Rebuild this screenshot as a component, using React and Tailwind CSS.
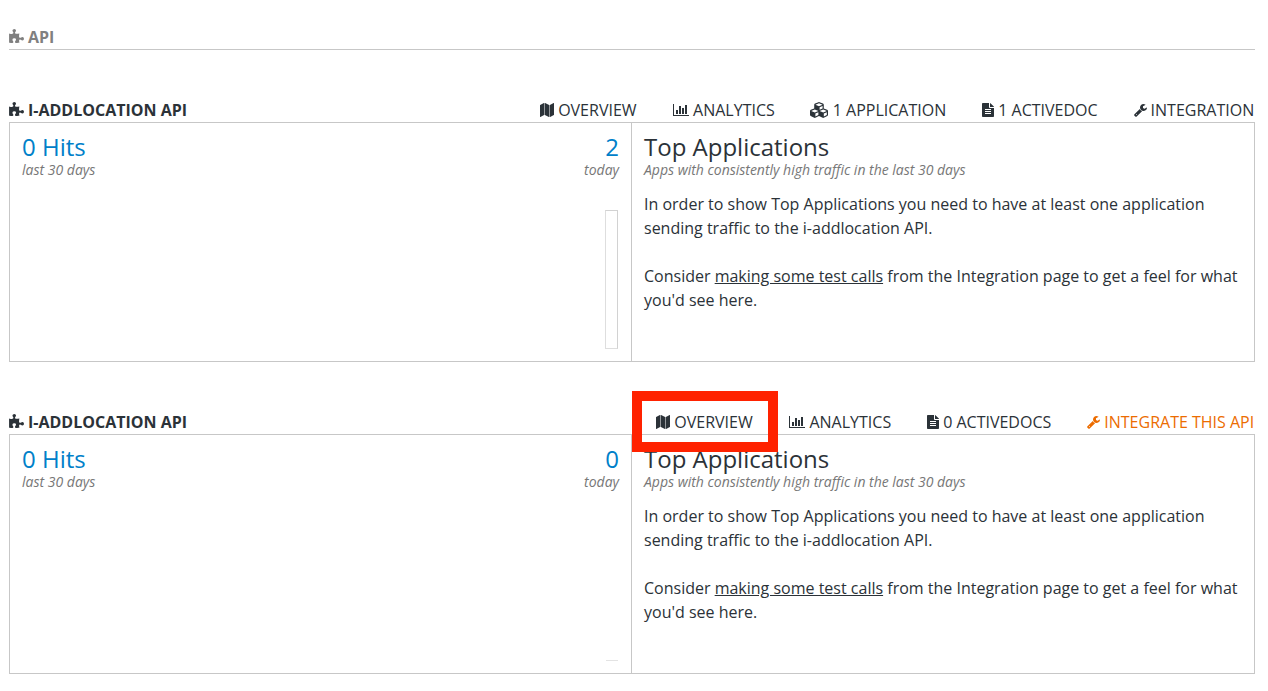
import React from "react";
import { FaCubes } from "react-icons/fa";

function PuzzleIcon() {
  return (
    <svg viewBox="0 0 1664 1792" className="h-[16px] w-[15px] shrink-0" fill="currentColor">
      <path d="M1664 1098q0 81-44.5 135t-123.5 54q-41 0-77.5-17.5t-59-38-56.5-38-71-17.5q-110 0-110 124 0 39 16 115t15 115v5q-22 0-33 1-34 3-97.5 11.5t-115.5 13.5-98 5q-61 0-103-26.5t-42-83.5q0-37 17.5-71t38-56.5 38-59 17.5-77.5q0-79-54-123.5t-135-44.5q-84 0-143 45.5t-59 127.5q0 43 15 83t33.5 64.5 33.5 53 15 50.5q0 45-46 89-37 35-117 35-95 0-245-24-9-2-27.5-4t-27.5-4l-13-2q-1 0-3-1-2 0-2-1v-1024q2 1 17.5 3.5t34 5 21.5 3.5q150 24 245 24 80 0 117-35 46-44 46-89 0-22-15-50.5t-33.5-53-33.5-64.5-15-83q0-82 59-127.5t144-45.5q80 0 134 44.5t54 123.5q0 41-17.5 77.5t-38 59-38 56.5-17.5 71q0 57 42 83.5t103 26.5q64 0 180-15t163-17v2q-1 2-3.5 17.5t-5 34-3.5 21.5q-24 150-24 245 0 80 35 117 44 46 89 46 22 0 50.5-15t53-33.5 64.5-33.5 83-15q82 0 127.5 59t45.5 143z" />
    </svg>
  );
}

function MapIcon() {
  return (
    <svg viewBox="0 0 1792 1792" className="h-[14px] w-[14px] shrink-0" fill="currentColor">
      <path d="M512 0q13 0 22.5 9.5t9.5 22.5v1472q0 20-17 28l-480 256q-7 4-15 4-13 0-22.5-9.5t-9.5-22.5v-1472q0-20 17-28l480-256q7-4 15-4zm1248 0q13 0 22.5 9.5t9.5 22.5v1472q0 20-17 28l-480 256q-7 4-15 4-13 0-22.5-9.5t-9.5-22.5v-1472q0-20 17-28l480-256q7-4 15-4zm-1120 0q8 0 14 3l512 256q18 10 18 29v1472q0 13-9.5 22.5t-22.5 9.5q-8 0-14-3l-512-256q-18-10-18-29v-1472q0-13 9.5-22.5t22.5-9.5z" />
    </svg>
  );
}

function BarChartIcon() {
  return (
    <svg viewBox="0 0 2048 1792" className="h-[14px] w-[16px] shrink-0" fill="currentColor">
      <path d="M640 896v512h-256v-512h256zm384-512v1024h-256v-1024h256zm1024 1152v128h-2048v-1536h128v1408h1920zm-640-896v768h-256v-768h256zm384-384v1152h-256v-1152h256z" />
    </svg>
  );
}

function FileIcon() {
  return (
    <svg viewBox="0 0 12 14" className="h-[14px] w-[12px] shrink-0" fill="currentColor">
      <path
        fillRule="evenodd"
        d="M.8 0H7v4.2c0 .4.3.8.8.8H12v8.2c0 .5-.3.8-.8.8H.8c-.5 0-.8-.3-.8-.8V.8C0 .3.3 0 .8 0zM3 6v1h6V6zm0 2v1h6V8zm0 2v1h6v-1zM8 0c.3.1.5.2.7.4l2.9 2.9c.2.2.3.4.4.7H8z"
      />
    </svg>
  );
}

function WrenchIcon() {
  return (
    <svg viewBox="64 0 1664 1792" className="h-[14px] w-[13px] shrink-0" fill="currentColor">
      <path
        fillRule="evenodd"
        d="M448 1472q0-26-19-45t-45-19-45 19-19 45 19 45 45 19 45-19 19-45zm644-420l-682 682q-37 37-90 37-52 0-91-37l-106-108q-38-36-38-90 0-53 38-91l681-681q39 98 114.5 173.5t173.5 114.5zm634-435q0 39-23 106-47 134-164.5 217.5t-258.5 83.5q-185 0-316.5-131.5t-131.5-316.5 131.5-316.5 316.5-131.5q58 0 121.5 16.5t107.5 46.5q16 11 16 28t-16 28l-293 169v224l193 107q5-3 79-48.5t135.5-81 70.5-35.5q15 0 23.5 10t8.5 25z"
      />
    </svg>
  );
}

const icons = {
  map: <MapIcon />,
  chart: <BarChartIcon />,
  cubes: <FaCubes className="h-[18px] w-[18px] shrink-0" />,
  file: <FileIcon />,
  wrench: <WrenchIcon />,
};

function NavItem({ icon, label, spacing = "gap-[4px]", accent, highlighted }) {
  return (
    <a className={`relative flex items-center whitespace-nowrap ${spacing} ${accent ? "text-[#ec6c00]" : ""}`}>
      {icons[icon]}
      <span>{label}</span>
      {highlighted && (
        <span className="absolute -left-[24px] -top-[19px] h-[61px] w-[146px] border-[10px] border-[#ff2200]" />
      )}
    </a>
  );
}

function ApiSection({ nav, today, busy }) {
  return (
    <section className="mb-12">
      <header className="flex h-6 items-center justify-between">
        <h2 className="flex items-center gap-[4px] font-bold">
          <PuzzleIcon />
          I-ADDLOCATION API
        </h2>
        <nav className="relative z-10 flex gap-[36px] pr-[0.8px]">
          {nav.map((item) => (
            <NavItem key={item.label} {...item} />
          ))}
        </nav>
      </header>
      <div className="flex h-[240px] border border-[#c7c7c7]">
        <div className="flex w-[622px] flex-col justify-between border-r border-[#c7c7c7] p-3">
          <div className="flex justify-between">
            <div>
              <div className="text-2xl leading-6 text-[#0080c9]">0 Hits</div>
              <div className="text-sm italic leading-[21px] text-[#777]">last 30 days</div>
            </div>
            <div className="text-right">
              <div className="text-2xl leading-6 text-[#0080c9]">{today}</div>
              <div className="text-sm italic leading-[21px] text-[#777]">today</div>
            </div>
          </div>
          {busy ? (
            <div className="mr-[1px] h-[139px] w-[13px] self-end border border-[#d2d2d2] border-b-[#dedede] border-l-[#dedede]" />
          ) : (
            <div className="mr-[1px] h-px w-[12px] self-end bg-[#e3e3e3]" />
          )}
        </div>
        <div className="flex-1 p-3">
          <div className="text-2xl leading-6">Top Applications</div>
          <div className="text-sm italic leading-[21px] tracking-[-0.01px] text-[#777]">
            Apps with consistently high traffic in the last 30 days
          </div>
          <p className="mt-3 leading-6">
            In order to show Top Applications you need to have at least one application
            <br />
            sending traffic to the i-addlocation API.
          </p>
          <p className="mt-6 leading-6">
            Consider <a className="underline">making some test calls</a> from the Integration page to get a feel for what
            <br />
            you'd see here.
          </p>
        </div>
      </div>
    </section>
  );
}

export default function App() {
  return (
    <main className="h-[691px] w-[1268px] overflow-hidden bg-white pl-[9px] pr-[13px] pt-[25px] font-['Open_Sans',sans-serif] text-base leading-6 text-[#2b3238]">
      <h1 className="mb-12 flex h-[25px] items-center gap-[4px] border-b border-[#c7c7c7] font-bold text-[#808080]">
        <PuzzleIcon />
        API
      </h1>
      <ApiSection
        today="2"
        busy
        nav={[
          { icon: "map", label: "OVERVIEW" },
          { icon: "chart", label: "ANALYTICS", spacing: "gap-[4.5px]" },
          { icon: "cubes", label: "1 APPLICATION", spacing: "gap-[4.5px] -ml-[0.5px]" },
          { icon: "file", label: "1 ACTIVEDOC" },
          { icon: "wrench", label: "INTEGRATION" },
        ]}
      />
      <ApiSection
        today="0"
        nav={[
          { icon: "map", label: "OVERVIEW", highlighted: true },
          { icon: "chart", label: "ANALYTICS", spacing: "gap-[4.7px]" },
          { icon: "file", label: "0 ACTIVEDOCS" },
          { icon: "wrench", label: "INTEGRATE THIS API", accent: true },
        ]}
      />
    </main>
  );
}
